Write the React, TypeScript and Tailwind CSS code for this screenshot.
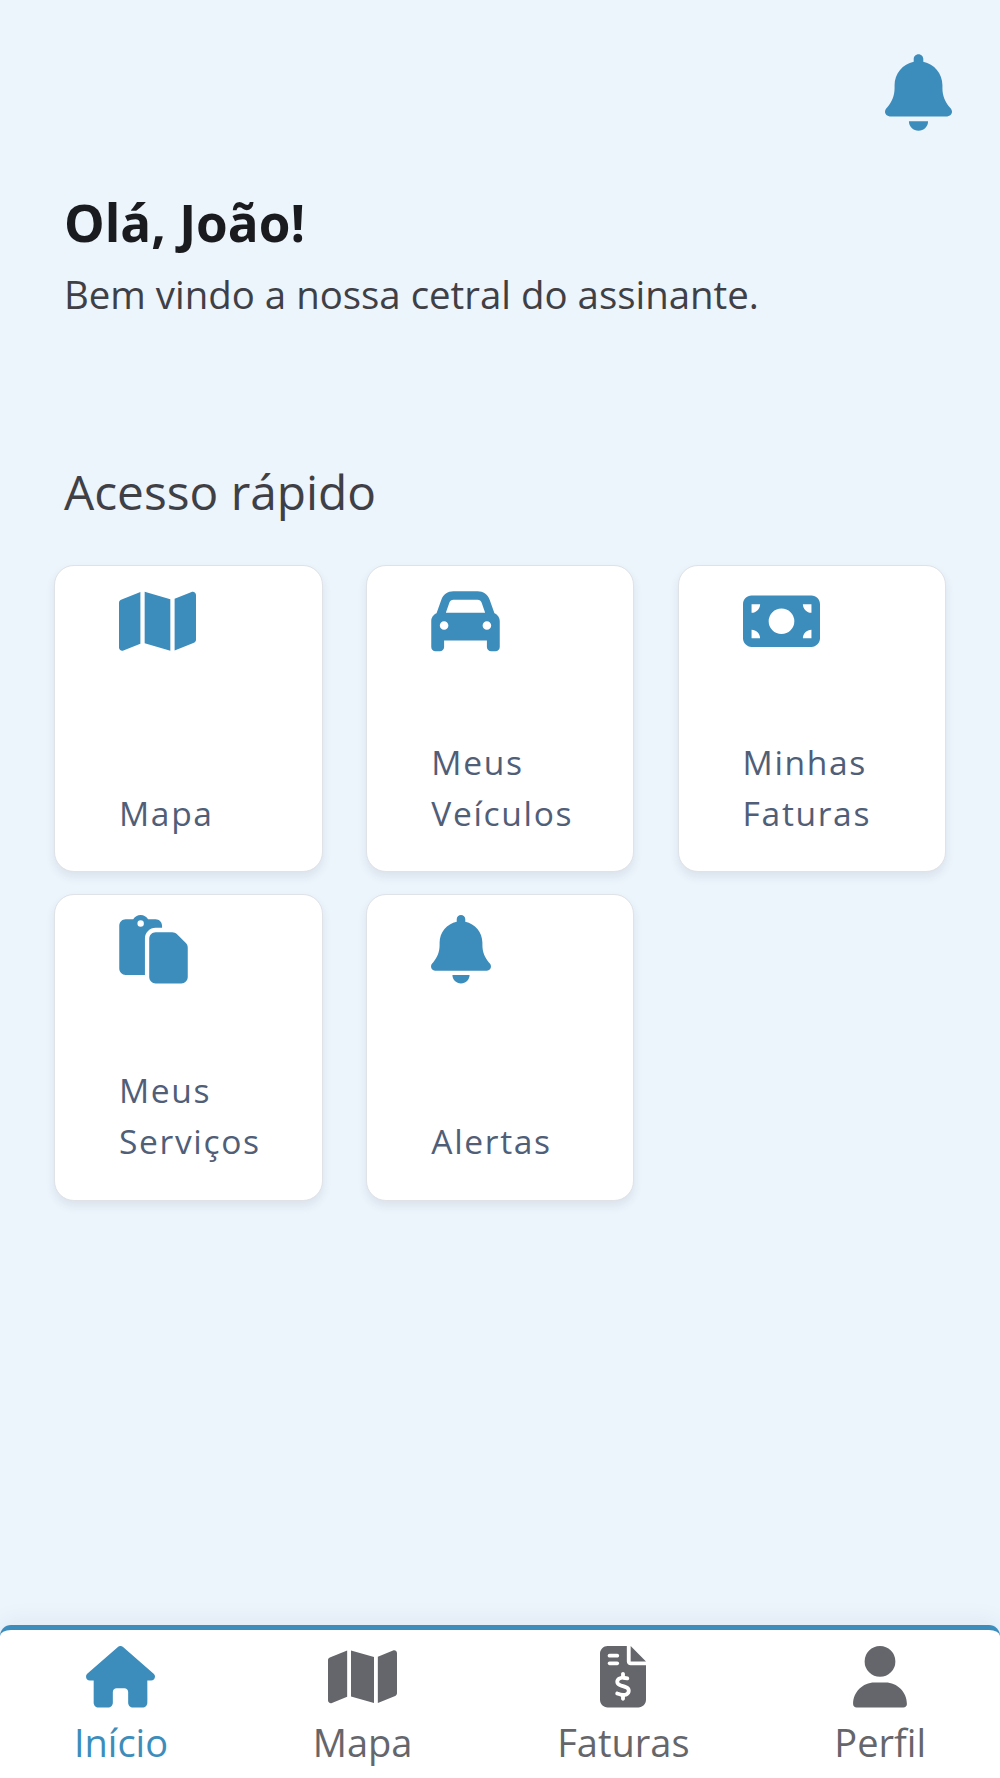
import React from "react";
import {
  FaBell,
  FaCar,
  FaFileInvoiceDollar,
  FaHouse,
  FaMap,
  FaMoneyBill,
  FaPaste,
  FaUser,
} from "react-icons/fa6";
import { clsx } from "clsx";

const shortcuts = [
  { label: "Mapa", icon: FaMap, iconWidth: "w-[77px]" },
  { label: "Meus Veículos", icon: FaCar, iconWidth: "w-[69px]" },
  { label: "Minhas Faturas", icon: FaMoneyBill, iconWidth: "w-[77px]" },
  { label: "Meus Serviços", icon: FaPaste, iconWidth: "w-[69px]" },
  { label: "Alertas", icon: FaBell, iconWidth: "w-[60px]" },
];

const tabs = [
  { label: "Início", icon: FaHouse, iconWidth: "w-[69px]", active: true },
  { label: "Mapa", icon: FaMap, iconWidth: "w-[69px]", active: false },
  { label: "Faturas", icon: FaFileInvoiceDollar, iconWidth: "w-[46px]", active: false },
  { label: "Perfil", icon: FaUser, iconWidth: "w-[54px]", active: false },
];

function Shortcuts() {
  return (
    <div className="mt-[41px] grid grid-cols-[268.5px_267.5px_268.5px] gap-x-[43.8px] gap-y-[21.5px] pl-[54px]">
      {shortcuts.map(({ label, icon: Icon, iconWidth }) => (
        <button
          key={label}
          className="flex h-[307px] flex-col items-start justify-between rounded-[20px] border border-[#dfe2e7] bg-white pt-[20.5px] pr-[40px] pb-[32px] pl-[64px] text-left shadow-[0_5px_10px_rgba(40,50,70,0.09)]"
        >
          <Icon className={clsx("h-[68.5px] text-[#3d8dbc]", iconWidth)} />
          <span className="text-[33.6px] leading-[51.2px] tracking-[1.65px] text-[#505e78]">
            {label}
          </span>
        </button>
      ))}
    </div>
  );
}

function TabBar() {
  return (
    <nav className="flex h-[153px] justify-around rounded-t-[11px] border-t-[5px] border-[#3d8dbc] bg-white px-[1.5px] pt-[16px] shadow-[0_-4px_24px_rgba(40,50,80,0.06)]">
      {tabs.map(({ label, icon: Icon, iconWidth, active }) => (
        <a
          key={label}
          href="#"
          className={clsx(
            "flex flex-col items-center gap-[6px]",
            active ? "text-[#3d8dbc]" : "text-[#65666b]"
          )}
        >
          <Icon className={clsx("h-[61.5px]", iconWidth)} />
          <span className="text-[38px] leading-[56px]">{label}</span>
        </a>
      ))}
    </nav>
  );
}

export default function App() {
  return (
    <div className="flex h-[1778px] w-[1000px] flex-col overflow-hidden bg-[#ecf4fc] font-['Open_Sans',sans-serif]">
      <header className="flex justify-end pt-[54px] pr-[48px]">
        <FaBell className="h-[77px] w-[67px] text-[#3d8dbc]" />
      </header>

      <main className="flex-1">
        <div className="px-[64px] pt-[59px]">
          <h1 className="text-[51.2px] leading-[64px] font-bold text-[#1a1b1e]">Olá, João!</h1>
          <p className="mt-[12px] text-[38.4px] leading-[56px] text-[#3f4045]">
            Bem vindo a nossa cetral do assinante.
          </p>
          <h2 className="mt-[138px] text-[47.8px] leading-[64px] text-[#3f4045]">Acesso rápido</h2>
        </div>
        <Shortcuts />
      </main>

      <TabBar />
    </div>
  );
}
